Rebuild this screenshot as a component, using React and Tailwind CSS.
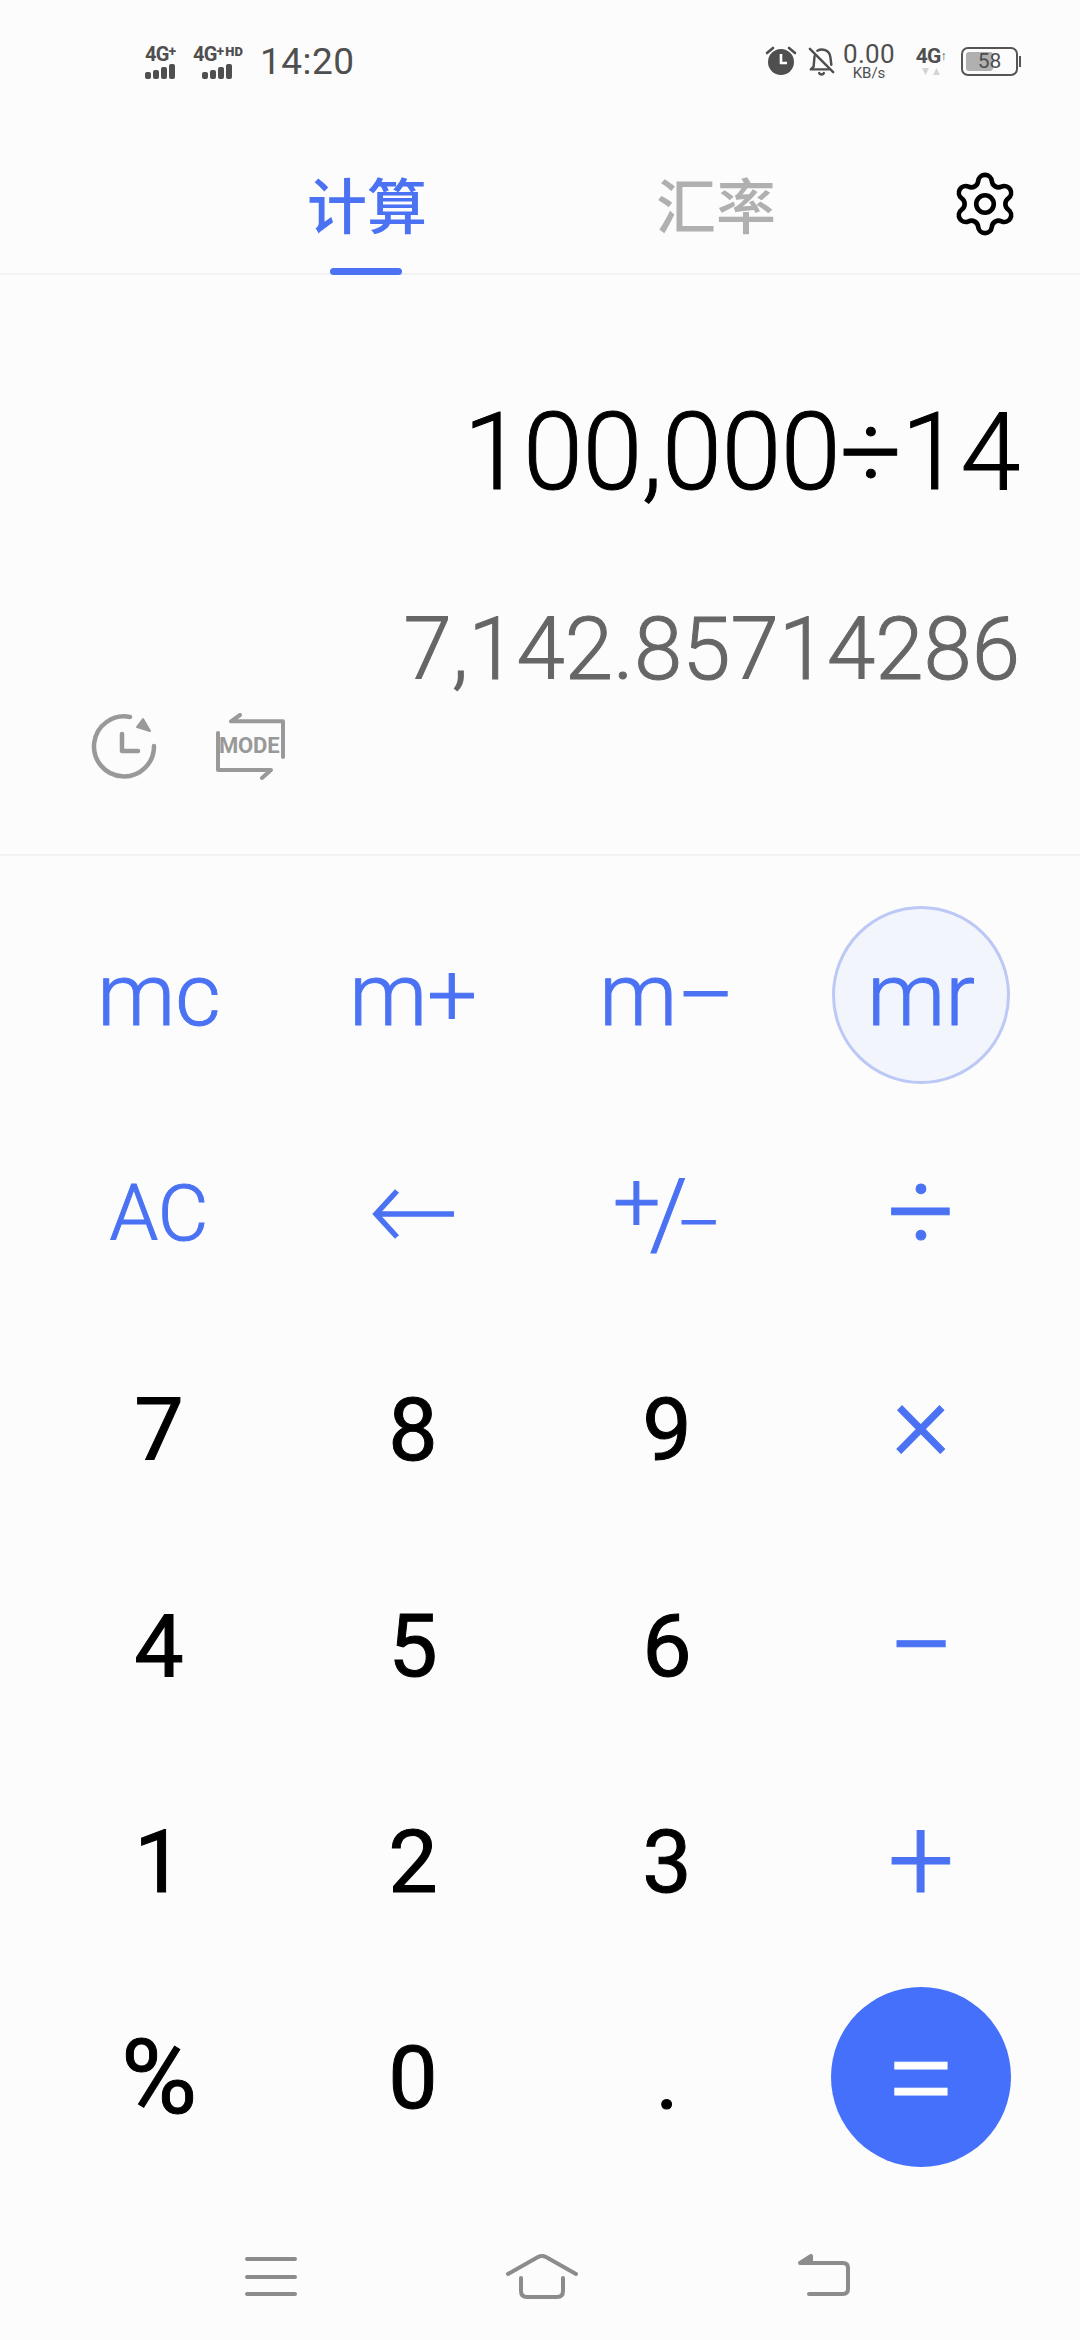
import React from "react";
import { Settings } from "lucide-react";

const BLUE = "text-[#4a72f3] font-light [-webkit-text-stroke:1px_#4a72f3]";

function Bars() {
  return (
    <div className="flex items-end gap-[2px] mt-[1px]">
      <div className="w-[6px] h-[7px] rounded-[2px] bg-[#4f4f4f]" />
      <div className="w-[6px] h-[9px] rounded-[2px] bg-[#4f4f4f]" />
      <div className="w-[6px] h-[12px] rounded-[2px] bg-[#4f4f4f]" />
      <div className="w-[6px] h-[15px] rounded-[2px] bg-[#4f4f4f]" />
    </div>
  );
}

function StatusBar() {
  return (
    <div className="h-[122px] pl-[145px] pr-[59px] flex items-center justify-between text-[#4f4f4f] font-['Roboto',sans-serif]">
      <div className="flex items-center">
        <div className="w-[35px]">
          <div className="text-[20px] leading-[18px] font-bold tracking-[-0.8px] whitespace-nowrap">4G<span className="text-[14px] align-[5px] leading-none">+</span></div>
          <Bars />
        </div>
        <div className="w-[55px] ml-[13px]">
          <div className="text-[20px] leading-[18px] font-bold tracking-[-0.8px] whitespace-nowrap">4G<span className="text-[14px] align-[5px] leading-none">+</span><span className="text-[13px] align-[5px] leading-none ml-[2px] font-black tracking-normal">HD</span></div>
          <div className="ml-[9px]"><Bars /></div>
        </div>
        <div className="ml-[12px] text-[37px] leading-none tracking-[0.5px]">14:20</div>
      </div>
      <div className="flex items-center">
        <svg width="32" height="34" viewBox="0 0 32 34" className="mr-[11px]">
          <circle cx="16" cy="18" r="13" fill="#4f4f4f" />
          <path d="M16 10v9h6" fill="none" stroke="#fff" strokeWidth="2.6" />
          <path d="M2 9l6-5M30 9l-6-5" stroke="#4f4f4f" strokeWidth="2.6" strokeLinecap="round" />
        </svg>
        <svg width="28" height="32" viewBox="0 0 30 32" className="mr-[7px]" fill="none" stroke="#4f4f4f" strokeWidth="2.6" strokeLinecap="round" strokeLinejoin="round">
          <path d="M2 3l25 25" />
          <path d="M10 5c5-3 13-1 14 7l1 8" />
          <path d="M7 11l-1 11-3 3h19" />
          <path d="M12 29c1 2 4 2 5 0" />
        </svg>
        <div className="w-[52px] flex flex-col items-center mr-[18px]">
          <div className="text-[26px] leading-[24px] tracking-[0.3px]">0.00</div>
          <div className="text-[15px] leading-[14px]">KB/s</div>
        </div>
        <div className="w-[36px] mr-[12px] flex flex-col items-center">
          <div className="text-[21px] leading-[20px] font-bold tracking-[-0.8px] whitespace-nowrap">4G<span className="text-[13px] align-[3px]">↑</span></div>
          <svg width="20" height="9" viewBox="0 0 20 9" className="mt-[1px]">
            <path d="M1 1h7l-3.500 7zM12 8h7l-3.500-7z" fill="#d4d4d4" />
          </svg>
        </div>
        <div className="flex items-center">
          <div className="relative w-[57px] h-[29px] rounded-[7px] border-[2px] border-[#555] flex items-center justify-center p-[3px]">
            <div className="absolute left-[3px] top-[3px] bottom-[3px] w-[27px] rounded-[3px] bg-[#b0b0b0]" />
            <span className="relative text-[21px] leading-none">58</span>
          </div>
          <div className="w-[2px] h-[11px] bg-[#555] ml-[1px]" />
        </div>
      </div>
    </div>
  );
}

function Tabs() {
  return (
    <div className="h-[153px] relative flex border-b-[2px] border-[#f2f2f2] font-['Noto_Sans_CJK_SC','Noto_Sans',sans-serif] text-[60px] leading-none">
      <div className="ml-[307px] w-[120px] pt-[51px] text-[#4a72f3] font-medium">计算</div>
      <div className="ml-[229px] w-[120px] pt-[51px] text-[#b0b0b0] font-medium">汇率</div>
      <Settings size={70} strokeWidth={1.6} color="#000" className="ml-[174px] mt-[47px]" />
      <div className="absolute left-[330px] bottom-[-2px] w-[72px] h-[7px] rounded-full bg-[#4a72f3]" />
    </div>
  );
}

function Display() {
  return (
    <div className="h-[581px] border-b-[2px] border-[#f2f2f2] pr-[60px] flex flex-col font-['Roboto',sans-serif]">
      <div className="text-right text-[108px] leading-none font-light [-webkit-text-stroke:1px_#000] text-black mt-[123px] tracking-[-0.5px]">100,000÷14</div>
      <div className="text-right text-[87px] leading-none font-light [-webkit-text-stroke:1px_#666] text-[#666] mt-[100px]">7,142.85714286</div>
      <div className="flex items-center ml-[90px] mt-[20px]">
        <svg width="68" height="68" viewBox="0 0 68 68" fill="none" stroke="#999" strokeWidth="4.500" strokeLinecap="round" strokeLinejoin="round">
          <path d="M64 33A30 30 0 1 1 40 4" />
          <path d="M60 18L53 6L47 14z" fill="#999" strokeWidth="2" />
          <path d="M32 21V38H48" />
        </svg>
        <div className="relative w-[70px] h-[68px] ml-[58px]">
          <svg width="70" height="68" viewBox="0 0 70 68" fill="none" stroke="#999" strokeWidth="4" strokeLinecap="round" strokeLinejoin="round" className="absolute inset-0">
            <path d="M24 2L15 8.300H67V44" />
            <path d="M2 20V57H55L46 65" />
          </svg>
          <span className="absolute left-[3px] top-[23px] text-[22px] leading-[20px] font-bold text-[#999] tracking-[-0.2px]">MODE</span>
        </div>
      </div>
    </div>
  );
}

const OP = `${BLUE} text-[118px]`;
const DIGIT = "text-black [-webkit-text-stroke:1px_#000]";

const KEYS = [
  { label: "mc", cls: BLUE },
  { label: "m+", cls: BLUE },
  { label: "m–", cls: BLUE },
  { label: "mr", cls: BLUE, circle: true },
  { label: "AC", cls: `${BLUE} text-[78px]` },
  { arrow: true },
  { plusMinus: true },
  { label: "÷", cls: `${OP} -translate-y-[2px]` },
  { label: "7" }, { label: "8" }, { label: "9" },
  { label: "×", cls: `${BLUE} text-[112px] -translate-y-[9px]` },
  { label: "4" }, { label: "5" }, { label: "6" },
  { label: "−", cls: OP },
  { label: "1" }, { label: "2" }, { label: "3" },
  { label: "+", cls: `${OP} -translate-y-[2px]` },
  { label: "%", cls: `${DIGIT} text-[104px]` }, { label: "0" }, { label: "." },
  { label: "=", equals: true },
];

function Key({ k }) {
  if (k.arrow) {
    return (
      <svg width="84" height="50" viewBox="0 0 84 50" fill="none" stroke="#4a72f3" strokeWidth="5.500">
        <path d="M83 25H5M26 2L5 25l21 23" />
      </svg>
    );
  }
  if (k.plusMinus) {
    return (
      <span className={`${BLUE} whitespace-nowrap flex items-center`}>
        <span className="text-[84px] -translate-y-[11px]">+</span>
        <span className="text-[96px] -mx-[11px]">/</span>
        <span className="text-[68px] translate-y-[10px]">–</span>
      </span>
    );
  }
  if (k.equals) {
    return (
      <div className="w-[180px] h-[180px] -mt-[2px] rounded-full bg-[#4470fb] flex items-center justify-center text-white text-[128px] font-light [-webkit-text-stroke:1px_#fff] leading-none">=</div>
    );
  }
  if (k.circle) {
    return (
      <div className={`w-[178px] h-[178px] rounded-full bg-[#f3f5fc] border-[3px] border-[#bcc8f5] flex items-center justify-center ${k.cls}`}>{k.label}</div>
    );
  }
  return <span className={k.cls || DIGIT}>{k.label}</span>;
}

function Keypad() {
  return (
    <div className="pl-[32px] pt-[34px] grid grid-cols-[repeat(4,254px)] auto-rows-[216px] text-[88px] leading-none font-['Roboto',sans-serif]">
      {KEYS.map((k, i) => (
        <div key={i} className={`flex items-center justify-center ${i < 4 ? "pb-[6px]" : ""}`}>
          <Key k={k} />
        </div>
      ))}
    </div>
  );
}

function NavBar() {
  return (
    <div className="h-[154px] flex items-start pt-[67px]">
      <svg width="52" height="40" viewBox="0 0 52 40" fill="none" stroke="#8c8c8c" strokeWidth="4" strokeLinecap="round" className="ml-[245px] mt-[4px]">
        <path d="M2 2h48M2 20h48M2 37h48" />
      </svg>
      <svg width="72" height="46" viewBox="0 0 72 46" fill="none" stroke="#8c8c8c" strokeWidth="4" strokeLinecap="round" strokeLinejoin="round" className="ml-[209px]">
        <path d="M2 21L32 4q4-2 8 0L70 21" />
        <path d="M15 25V38q0 6 6 6h30q6 0 6-6V25" />
      </svg>
      <svg width="54" height="44" viewBox="0 0 54 44" fill="none" stroke="#8c8c8c" strokeWidth="4" strokeLinecap="round" strokeLinejoin="round" className="ml-[219px]">
        <path d="M10 10H46q5 0 5 5V36q0 5-5 5H12" />
        <path d="M3 10L14 3V10z" fill="#8c8c8c" />
      </svg>
    </div>
  );
}

export default function App() {
  return (
    <div className="w-[1080px] h-[2340px] bg-[#fcfcfc] overflow-hidden">
      <StatusBar />
      <Tabs />
      <Display />
      <Keypad />
      <NavBar />
    </div>
  );
}
